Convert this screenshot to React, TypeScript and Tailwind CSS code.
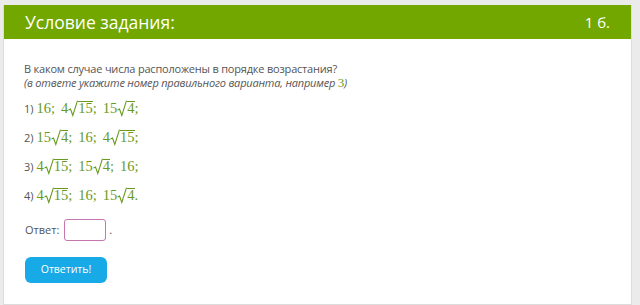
import React from "react";

const Sq = ({ children }: { children: React.ReactNode }) => (
  <span className="inline-block whitespace-nowrap">
    <svg width="10" height="17" viewBox="0 0 10 17" className="inline-block align-[-4px]">
      <path d="M0.5 10 L2.5 9 L4.8 15.5 L9.5 0.6" fill="none" stroke="#6a9a1f" strokeWidth="1.1" />
    </svg>
    <span className="inline-block border-t border-[#6a9a1f] leading-[13px]">{children}</span>
  </span>
);

const M = ({ children }: { children: React.ReactNode }) => (
  <span className="text-[#6a9a1f] text-[14.5px] whitespace-nowrap" style={{ fontFamily: '"Liberation Serif", serif' }}>
    {children}
  </span>
);

const G = () => <span className="inline-block w-[6px]"></span>;

const Opt = ({ n, children }: { n: number; children: React.ReactNode }) => (
  <div className="h-[29px] leading-[29px]">
    <span className="text-[11px] text-[#555] mr-[3px]">{n})</span>
    {children}
  </div>
);

export default function App() {
  return (
    <div className="w-[640px] h-[305px] bg-[#ebebeb] pt-[5px] pl-[3px] pr-[8px] overflow-hidden" style={{ fontFamily: '"Open Sans", sans-serif' }}>
      <div className="bg-white border-l border-r border-b border-[#dcdcdc] h-[300px]">
        <div className="h-[34px] bg-[#72a700] flex items-center justify-between pl-[21px] pr-[21px] text-white text-[17.5px]">
          <span>Условие задания:</span>
          <span className="text-[15px]">1 б.</span>
        </div>
        <div className="pl-[20px] pt-[23px] text-[#555]">
          <div className="text-[11px] leading-[14px] tracking-[-0.2px]">В каком случае числа расположены в порядке возрастания?</div>
          <div className="text-[11px] leading-[14px] italic tracking-[-0.2px]">
            (в ответе укажите номер правильного варианта, например{" "}
            <span className="text-[#6a9a1f] text-[13px] not-italic" style={{ fontFamily: '"Liberation Serif", serif' }}>3</span>)
          </div>
          <div className="mt-[3px]">
            <Opt n={1}>
              <M>16;<G />4<Sq>15</Sq>;<G />15<Sq>4</Sq>;</M>
            </Opt>
            <Opt n={2}>
              <M>15<Sq>4</Sq>;<G />16;<G />4<Sq>15</Sq>;</M>
            </Opt>
            <Opt n={3}>
              <M>4<Sq>15</Sq>;<G />15<Sq>4</Sq>;<G />16;</M>
            </Opt>
            <Opt n={4}>
              <M>4<Sq>15</Sq>;<G />16;<G />15<Sq>4</Sq>.</M>
            </Opt>
          </div>
          <div className="flex items-center mt-[10px] text-[11px]">
            <span className="ml-[1px]">Ответ:</span>
            <span className="ml-[5px] w-[42px] h-[22px] border border-[#c576b0] rounded-[3px] inline-block"></span>
            <span className="ml-[3px]">.</span>
          </div>
          <button className="mt-[16px] ml-[1px] w-[82px] h-[26px] bg-[#17aae6] rounded-[6px] text-white text-[10.5px]" style={{ fontFamily: '"Open Sans", sans-serif' }}>
            Ответить!
          </button>
        </div>
      </div>
    </div>
  );
}
